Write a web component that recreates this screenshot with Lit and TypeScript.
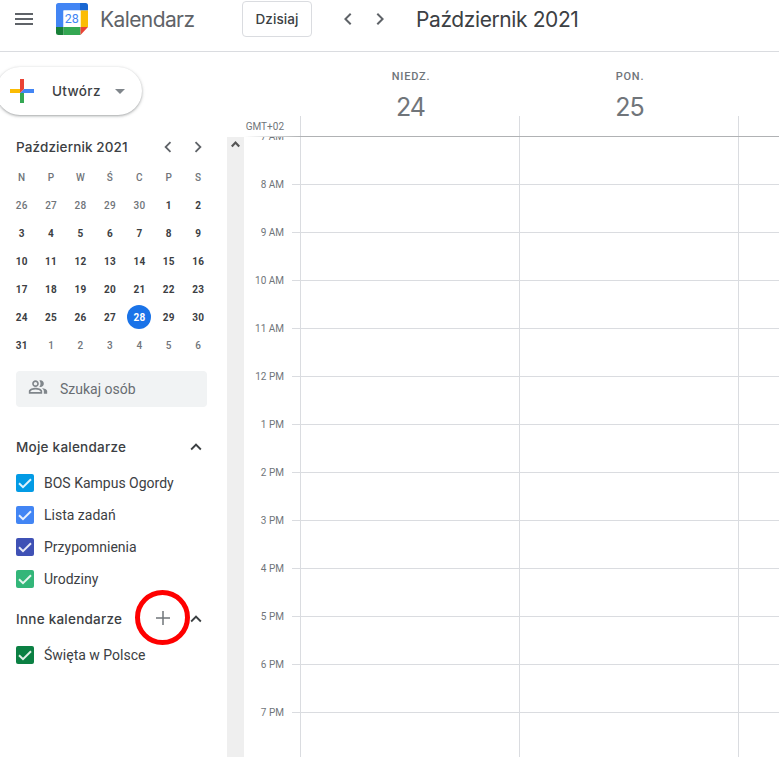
import { LitElement, html, svg, css } from "lit";
import { customElement, property } from "lit/decorators.js";
import { classMap } from "lit/directives/class-map.js";
import { styleMap } from "lit/directives/style-map.js";

const ICONS: Record<string, unknown> = {
  menu: svg`<path d="M3 18h18v-2H3v2zm0-5h18v-2H3v2zm0-7v2h18V6H3z"/>`,
  left: svg`<path d="M15.41 7.41L14 6l-6 6 6 6 1.41-1.41L10.83 12z"/>`,
  right: svg`<path d="M10 6L8.59 7.41 13.17 12l-4.58 4.59L10 18l6-6z"/>`,
  up: svg`<path d="M12 8l-6 6 1.41 1.41L12 10.83l4.59 4.58L18 14z"/>`,
  drop: svg`<path d="M7 10l5 5 5-5z"/>`,
  people: svg`<path d="M16.67 13.13C18.04 14.06 19 15.32 19 17v3h4v-3c0-2.18-3.57-3.47-6.33-3.87z"/><path d="M15 12c2.21 0 4-1.79 4-4s-1.79-4-4-4c-.47 0-.91.1-1.33.24C14.5 5.27 15 6.58 15 8s-.5 2.73-1.33 3.76c.42.14.86.24 1.33.24z"/><path d="M9 12c2.21 0 4-1.79 4-4s-1.79-4-4-4-4 1.79-4 4 1.79 4 4 4zm0-6c1.1 0 2 .9 2 2s-.9 2-2 2-2-.9-2-2 .9-2 2-2zm0 7c-2.67 0-8 1.34-8 4v3h16v-3c0-2.66-5.33-4-8-4zm6 5H3v-.99C3.2 16.29 6.3 15 9 15s5.8 1.29 6 2v1z"/>`,
};

@customElement("cal-icon")
export class CalIcon extends LitElement {
  @property() name = "menu";
  static styles = css`
    :host { display: block; flex: none; width: 24px; height: 24px; }
    svg { display: block; width: 100%; height: 100%; fill: currentColor; }
  `;
  render() {
    return html`<svg viewBox="0 0 24 24">${ICONS[this.name]}</svg>`;
  }
}

@customElement("mini-month")
export class MiniMonth extends LitElement {
  static styles = css`
    :host { display: block; color: #3c4043; font-family: Roboto, sans-serif; }
    .bar { display: flex; align-items: center; height: 28px; padding: 0 10px 0 16px; }
    .title { flex: 1; font: 550 13.5px/28px Inter, sans-serif; letter-spacing: 0.12px; white-space: nowrap; }
    .bar cal-icon { width: 22px; height: 22px; margin-right: 8px; color: #5f6368; }
    .days { display: grid; grid-template-columns: repeat(7, 1fr); width: 206px; margin: 2px 0 0 7px; }
    .cell { display: grid; place-items: center; height: 28px; font-size: 10px; font-weight: 500; letter-spacing: 0.3px; }
    .muted { color: #70757a; }
    .num { width: 24px; height: 24px; box-sizing: border-box; padding-top: 1px; line-height: 24px; text-align: center; border-radius: 50%; }
    .date { font-weight: 700; }
    .today .num { background: #1a73e8; color: #fff; }
    .muted.date { font-weight: 500; }
  `;
  render() {
    const days = Array.from({ length: 42 }, (_, i) => {
      const n = i - 4;
      return { label: n < 1 ? n + 30 : n > 31 ? n - 31 : n, muted: n < 1 || n > 31, today: n === 28 };
    });
    return html`
      <div class="bar">
        <div class="title">Październik 2021</div>
        <cal-icon name="left"></cal-icon><cal-icon name="right"></cal-icon>
      </div>
      <div class="days">
        ${["N", "P", "W", "Ś", "C", "P", "S"].map((d) => html`<div class="cell muted">${d}</div>`)}
        ${days.map((d) => html`<div class=${classMap({ cell: true, date: true, muted: d.muted, today: d.today })}><span class="num">${d.label}</span></div>`)}
      </div>
    `;
  }
}

@customElement("calendar-list")
export class CalendarList extends LitElement {
  @property() heading = "";
  @property({ type: Boolean }) addable = false;
  @property({ attribute: false }) items: { name: string; color: string }[] = [];
  static styles = css`
    :host { display: block; color: #3c4043; }
    .head { display: flex; align-items: center; height: 32px; margin-bottom: 4px; padding: 0 20px 0 16px; }
    .title { flex: 1; font: 550 13.5px/32px Inter, sans-serif; letter-spacing: 0.24px; white-space: nowrap; }
    .arrow { width: 22px; height: 22px; }
    .add { position: relative; width: 20px; height: 20px; margin: -4px 12px 0 0; color: #70757a; }
    .plus { display: block; width: 20px; height: 20px; }
    .ring { position: absolute; left: -18px; top: -17px; width: 45px; height: 45px; border: 5px solid #fe0000; border-radius: 50%; }
    .row { display: flex; align-items: center; gap: 10px; height: 32px; padding-left: 16px; font: 14px/32px Roboto, sans-serif; }
    .box { display: block; width: 18px; height: 18px; border-radius: 2px; }
    .box svg { display: block; }
  `;
  render() {
    return html`
      <div class="head">
        <div class="title">${this.heading}</div>
        ${this.addable
          ? html`<div class="add">
              <svg class="plus" viewBox="0 0 20 20"><path d="M10 4v14M3 11h14" stroke="currentColor" stroke-width="1.500" /></svg>
              <span class="ring"></span>
            </div>`
          : ""}
        <cal-icon class="arrow" name="up"></cal-icon>
      </div>
      ${this.items.map((it) => html`<div class="row">
        <span class="box" style=${styleMap({ background: it.color })}>
          <svg width="18" height="18" viewBox="0 0 18 18"><path d="M3 9.200l4 4 8-8" fill="none" stroke="#fff" stroke-opacity=".88" stroke-width="2" /></svg>
        </span>
        <span>${it.name}</span>
      </div>`)}
    `;
  }
}

@customElement("app-root")
export class AppRoot extends LitElement {
  static styles = css`
    :host { display: flex; flex-direction: column; width: 779px; height: 757px; overflow: hidden; background: #fff; color: #3c4043; font-family: Roboto, sans-serif; }
    .top { display: flex; align-items: center; flex: none; box-sizing: border-box; height: 52px; padding: 0 0 13px 12px; border-bottom: 1px solid #dadce0; color: #5f6368; }
    .logo { display: block; flex: none; width: 32px; height: 32px; margin-left: 20px; }
    .brand { width: 142px; margin-left: 12px; padding-top: 2px; font: 400 21px/36px Inter, sans-serif; letter-spacing: -0.6px; white-space: nowrap; }
    .today { box-sizing: border-box; width: 70px; height: 36px; border: 1px solid #dadce0; border-radius: 4px; color: #3c4043; text-align: center; font: 550 13.5px/34px Inter, sans-serif; letter-spacing: 0.1px; }
    .prev { margin-left: 24px; }
    .next { margin-left: 8px; }
    .month { margin-left: 24px; padding-top: 2px; color: #3c4043; font: 400 21px/36px Inter, sans-serif; letter-spacing: -0.4px; white-space: nowrap; }
    .main { display: flex; flex: 1; min-height: 0; }
    .side { flex: none; width: 227px; }
    .create { display: flex; align-items: center; box-sizing: border-box; width: 146px; height: 48px; margin: 15px 0 18px -4px; padding-left: 14px; border-radius: 24px; background: #fff; box-shadow: 0 1px 2px rgba(60,64,67,.3), 0 1px 3px 1px rgba(60,64,67,.15); font: 550 13.5px/48px Inter, sans-serif; letter-spacing: 0.35px; }
    .cross { flex: none; width: 24px; height: 24px; margin-right: 18px; }
    .word { width: 56px; }
    .create cal-icon { color: #80868b; }
    .search { display: flex; align-items: center; width: 191px; height: 36px; box-sizing: border-box; margin: 12px 0 24px 16px; padding-left: 12px; gap: 12px; border-radius: 4px; background: #f1f3f4; color: #686d72; font-size: 14px; }
    .search cal-icon { width: 20px; height: 20px; color: #80868b; margin-top: -4px; }
    .others { margin-top: 8px; }
    .scroll { flex: none; width: 17px; margin-top: 85px; background: #efefef; }
    .scroll svg { display: block; }
    .week { display: flex; flex-direction: column; flex: 1; min-width: 0; color: #70757a; }
    .heads { display: grid; grid-template-columns: 56px 219px 219px 1fr; flex: none; height: 84px; }
    .zone { align-self: end; padding: 0 16px 3px 0; margin-left: -10px; text-align: right; font-size: 10px; line-height: 13px; white-space: nowrap; }
    .day { display: flex; flex-direction: column; align-items: center; background: linear-gradient(#dadce0, #dadce0) left bottom / 1px 20px no-repeat; }
    .name { margin: 18px 0 0 3px; font-size: 11px; font-weight: 500; line-height: 14px; letter-spacing: 0.8px; }
    .num { margin: 5px 0 0 2px; font: 400 25px/36px Inter, sans-serif; letter-spacing: -1px; }
    .rule { flex: none; height: 1px; background: linear-gradient(90deg, #fff, #b0b2b4 56px); }
    .hours { flex: 1; min-height: 0; overflow: hidden; }
    .hour { display: grid; grid-template-columns: 48px 8px 219px 219px 1fr; height: 48px; }
    .hour:first-child { margin-top: -1px; }
    .label { margin-top: -6px; padding-right: 8px; height: 14px; text-align: right; font-size: 10px; line-height: 14px; }
    .line { border-top: 1px solid #dadce0; }
    .slot { border-left: 1px solid #dadce0; }
    .hour:first-child .line { border-top-color: transparent; }
    .hour:first-child .slot { border-top: 0; }
  `;

  private mine = [
    { name: "BOS Kampus Ogordy", color: "#039be5" },
    { name: "Lista zadań", color: "#4285f4" },
    { name: "Przypomnienia", color: "#3f51b5" },
    { name: "Urodziny", color: "#33b679" },
  ];
  private others = [{ name: "Święta w Polsce", color: "#0b8043" }];
  private hours = ["7 AM", "8 AM", "9 AM", "10 AM", "11 AM", "12 PM", "1 PM", "2 PM", "3 PM", "4 PM", "5 PM", "6 PM", "7 PM"];

  render() {
    return html`
      <header class="top">
        <cal-icon name="menu"></cal-icon>
        <svg class="logo" viewBox="0 0 32 32">
          <path fill="#4285f4" d="M2.5 0H24v7.5H7.5V24H0V2.5A2.5 2.5 0 0 1 2.500 0z" />
          <path fill="#1967d2" d="M24 0h5.500A2.500 2.500 0 0 1 32 2.500V7.500h-8z" />
          <path fill="#fbbc04" d="M24.500 7.500H32V24h-7.500z" />
          <path fill="#34a853" d="M7.500 24H24.500v8H7.500z" />
          <path fill="#188038" d="M0 24h7.500v8h-5A2.500 2.500 0 0 1 0 29.500z" />
          <path fill="#ea4335" d="M24.500 24H32l-7.500 8z" />
          <path fill="#fff" d="M7.500 7.500h17V24h-17z" />
          <text x="15.800" y="20.300" text-anchor="middle" font-family="Roboto, sans-serif" font-size="12.500" fill="#4285f4">28</text>
        </svg>
        <div class="brand">Kalendarz</div>
        <div class="today">Dzisiaj</div>
        <cal-icon class="prev" name="left"></cal-icon>
        <cal-icon class="next" name="right"></cal-icon>
        <div class="month">Październik 2021</div>
      </header>
      <div class="main">
        <aside class="side">
          <div class="create">
            <svg class="cross" viewBox="0 0 24 24">
              <path fill="#fbbc04" d="M0 10h10v4H0z" />
              <path fill="#34a853" d="M10 14h4v10h-4z" />
              <path fill="#4285f4" d="M14 10h10v4H10z" />
              <path fill="#ea4335" d="M10 0h4v10l-4 4z" />
            </svg>
            <span class="word">Utwórz</span>
            <cal-icon name="drop"></cal-icon>
          </div>
          <mini-month></mini-month>
          <div class="search"><cal-icon name="people"></cal-icon><span>Szukaj osób</span></div>
          <calendar-list heading="Moje kalendarze" .items=${this.mine}></calendar-list>
          <calendar-list class="others" heading="Inne kalendarze" addable .items=${this.others}></calendar-list>
        </aside>
        <div class="scroll">
          <svg width="17" height="17" viewBox="0 0 17 17"><path d="M4.800 9.500l3.700-3.900 3.700 3.900" fill="none" stroke="#555" stroke-width="2.200" /></svg>
        </div>
        <section class="week">
          <div class="heads">
            <div class="zone">GMT+02</div>
            <div class="day"><span class="name">NIEDZ.</span><span class="num">24</span></div>
            <div class="day"><span class="name">PON.</span><span class="num">25</span></div>
            <div class="day"></div>
          </div>
          <div class="rule"></div>
          <div class="hours">
            ${this.hours.map((h) => html`<div class="hour">
              <div class="label">${h}</div>
              <div class="line"></div>
              <div class="line slot"></div>
              <div class="line slot"></div>
              <div class="line slot"></div>
            </div>`)}
          </div>
        </section>
      </div>
    `;
  }
}
